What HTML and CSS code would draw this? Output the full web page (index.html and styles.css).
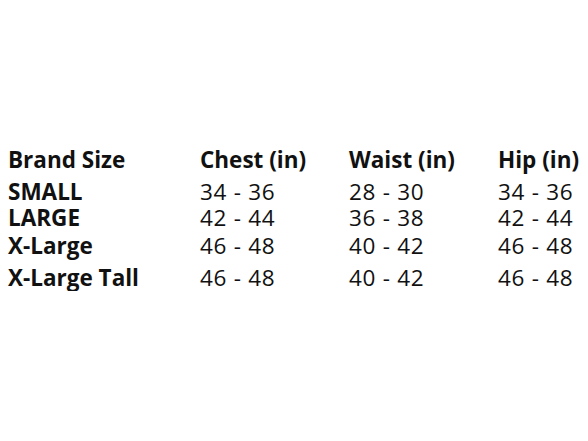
FILE: index.html
```html
<!DOCTYPE html>
<html>
<head>
<meta charset="utf-8">
<link rel="stylesheet" href="styles.css">
</head>
<body>
<div class="chart">
  <div class="cell head">Brand Size</div>
  <div class="cell head">Chest (in)</div>
  <div class="cell head">Waist (in)</div>
  <div class="cell head">Hip (in)</div>

  <div class="cell label">SMALL</div>
  <div class="cell">34 - 36</div>
  <div class="cell">28 - 30</div>
  <div class="cell">34 - 36</div>

  <div class="cell label">LARGE</div>
  <div class="cell">42 - 44</div>
  <div class="cell">36 - 38</div>
  <div class="cell">42 - 44</div>

  <div class="cell label">X-Large</div>
  <div class="cell">46 - 48</div>
  <div class="cell">40 - 42</div>
  <div class="cell">46 - 48</div>

  <div class="cell label">X-Large Tall</div>
  <div class="cell">46 - 48</div>
  <div class="cell">40 - 42</div>
  <div class="cell">46 - 48</div>
</div>
</body>
</html>
```
FILE: styles.css
```css
html, body {
  margin: 0;
  background: #ffffff;
}
body {
  padding: 147px 0 0 8px;
  font-family: "Open Sans", "Noto Sans", sans-serif;
  font-size: 22.5px;
  color: #111111;
}
.chart {
  display: grid;
  grid-template-columns: 192px 149px 149px auto;
  grid-template-rows: 32px 26px 28px 32px 26px;
}
.cell {
  line-height: 26px;
  white-space: nowrap;
  letter-spacing: 0.7px;
}
.head, .label {
  font-weight: 700;
  letter-spacing: 0;
}
```
